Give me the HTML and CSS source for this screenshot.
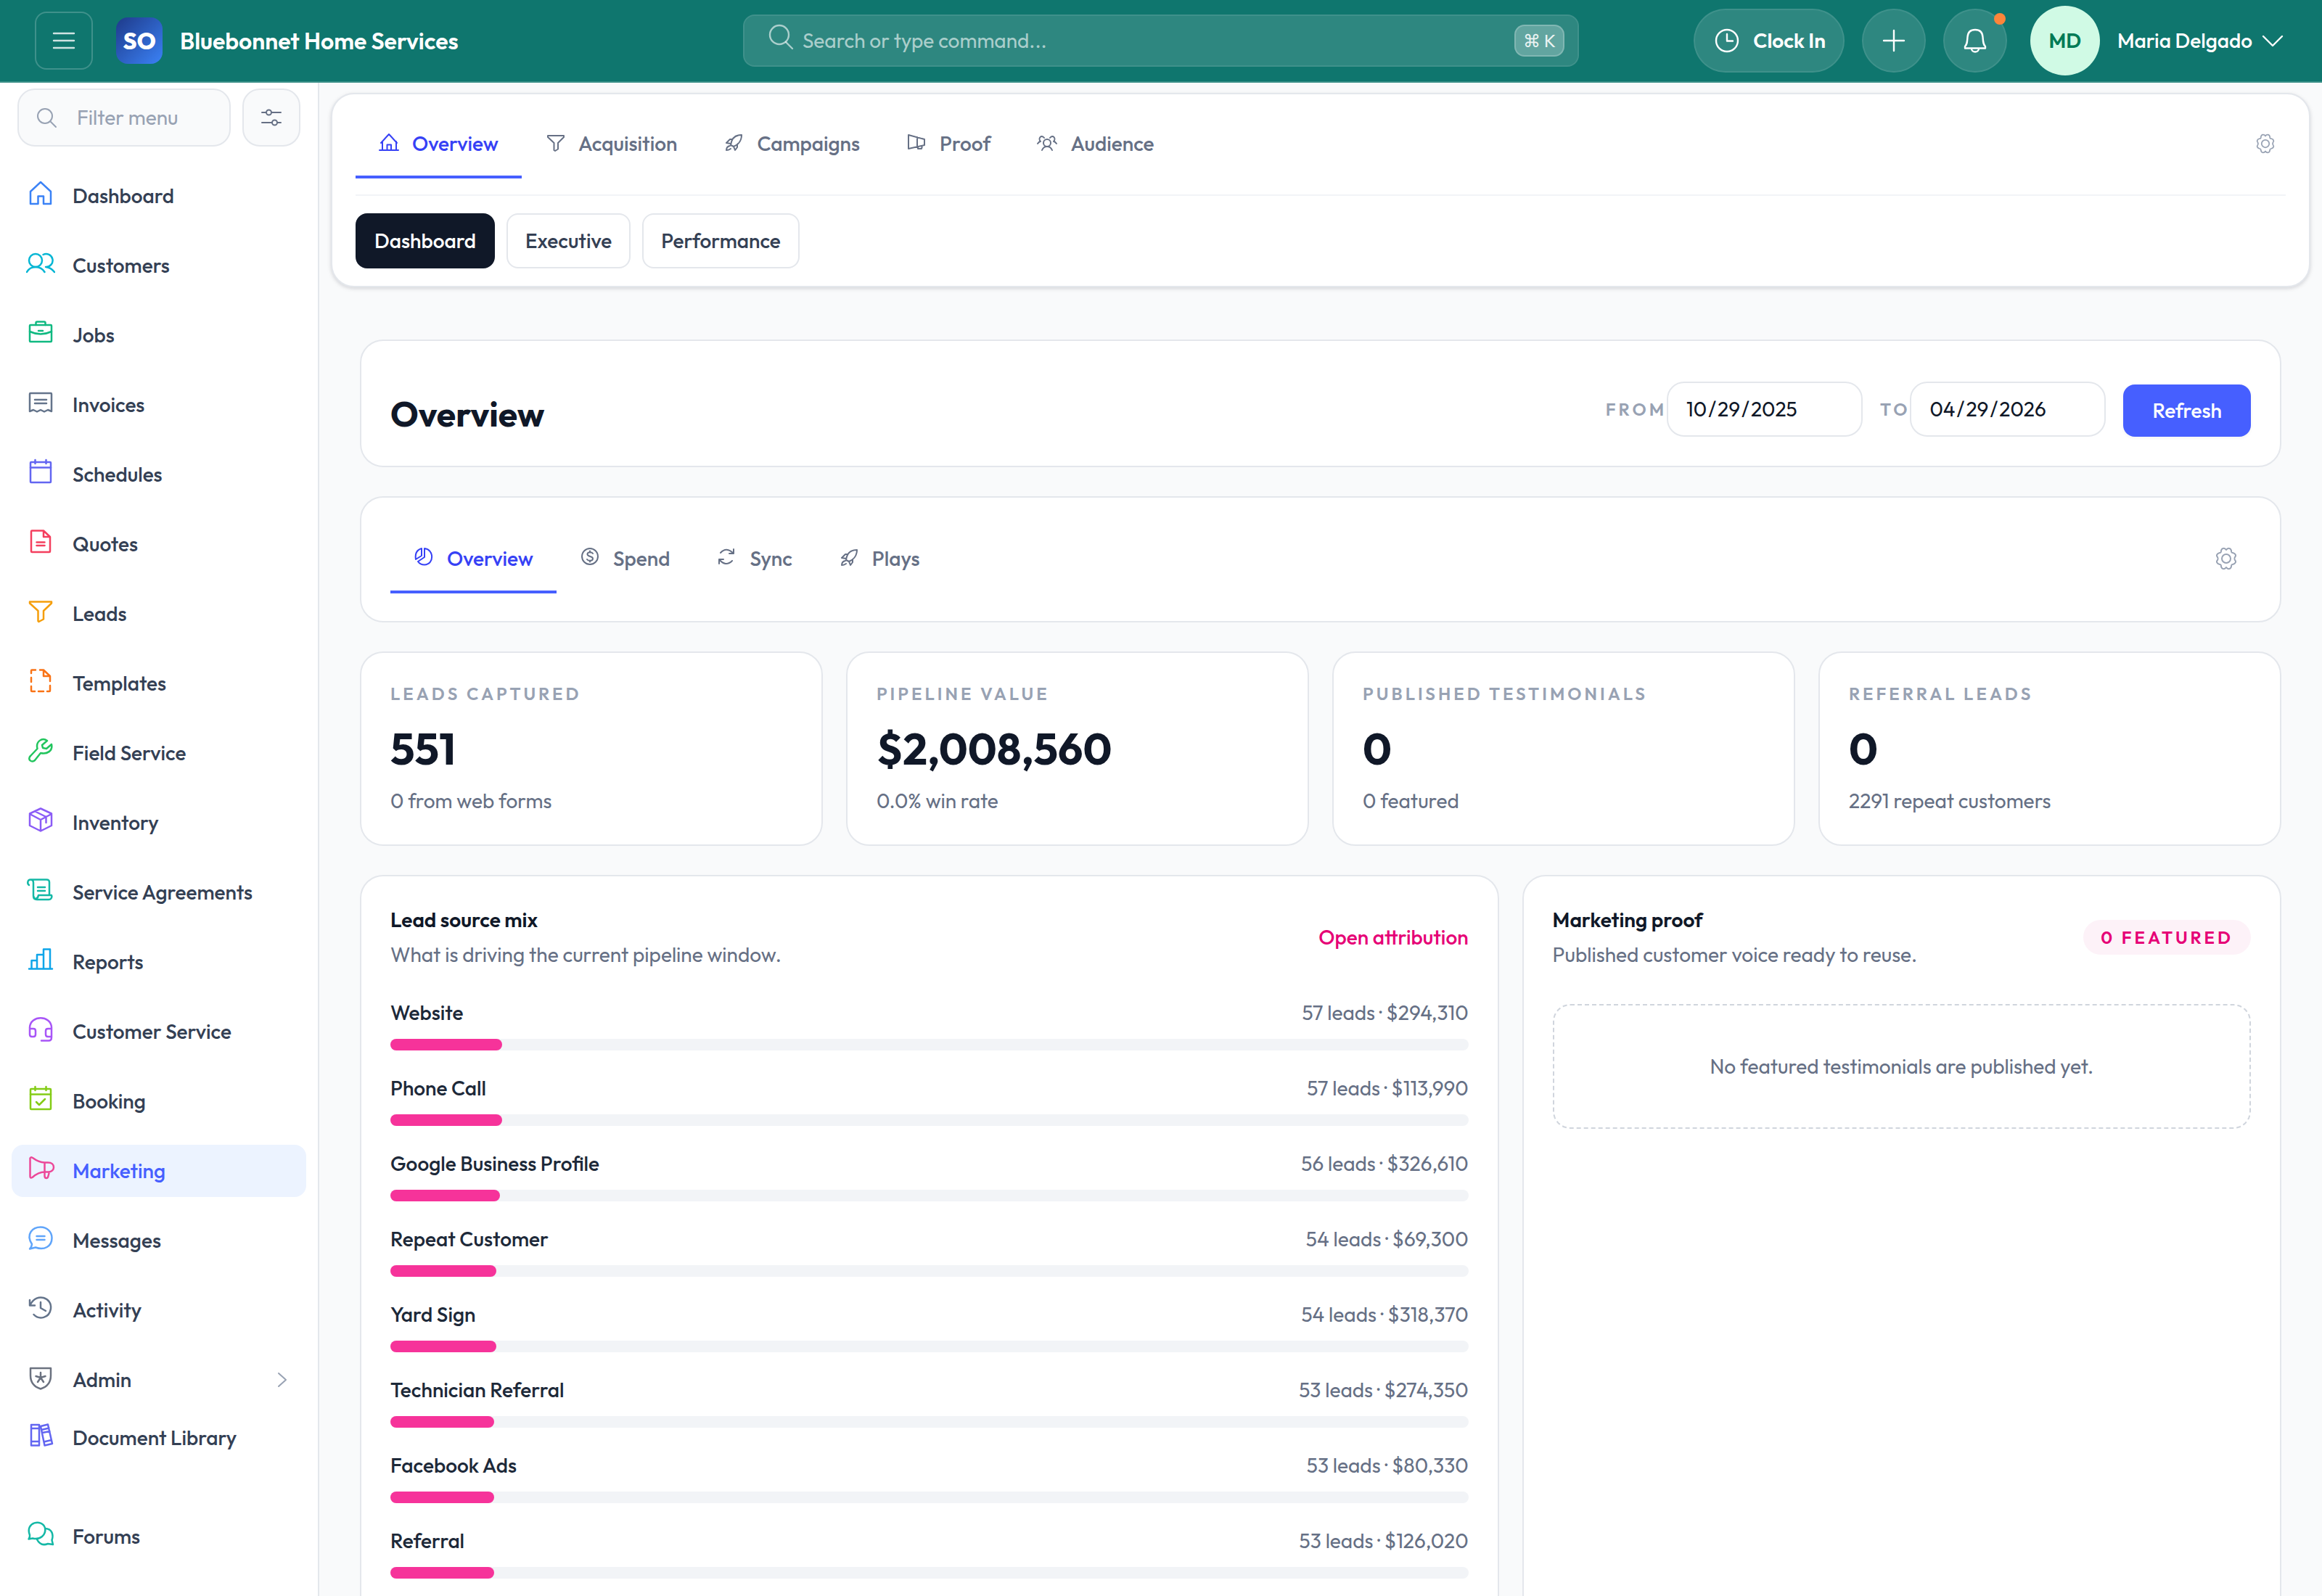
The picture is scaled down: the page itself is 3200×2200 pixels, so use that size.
FILE: index.html
```html
<!DOCTYPE html>
<html lang="en">
<head>
	<meta charset="utf-8">
	<title>Marketing Overview</title>
	<meta name="viewport" content="width=device-width, initial-scale=1.0">
	<link rel="stylesheet" href="styles.css">
</head>
<body>
	<header class="topbar">
		<div class="topbar-left">
			<button class="menu-btn" type="button" aria-label="Toggle menu">
				<svg width="40" height="40" viewBox="0 0 40 40"><path d="M6 10H34M6 20H34M6 30H34"/></svg>
			</button>
			<span class="logo">SO</span>
			<span class="company">Bluebonnet Home Services</span>
		</div>

		<label class="search">
			<svg width="40" height="40" viewBox="0 0 40 40"><circle cx="18" cy="17" r="13"/><path d="M27 27L36 36"/></svg>
			<input type="text" placeholder="Search or type command..." aria-label="Search">
			<kbd>⌘ K</kbd>
		</label>

		<div class="topbar-right">
			<button class="clock-btn" type="button">
				<svg width="40" height="40" viewBox="0 0 40 40"><circle cx="20" cy="20" r="15"/><path d="M20 11V20.500H28"/></svg>
				Clock In
			</button>
			<button class="round-btn" type="button" aria-label="Add">
				<svg width="40" height="40" viewBox="0 0 40 40"><path d="M20 6V34M6 20H34"/></svg>
			</button>
			<button class="round-btn" type="button" aria-label="Notifications">
				<svg width="40" height="40" viewBox="0 0 40 40"><path d="M6 30.500V28C9 25 9 22 9.500 15C10 8 14 5 20 5S30 8 30.500 15C31 22 31 25 34 28V30.500ZM15 31C15 37 25 37 25 31"/></svg>
				<span class="dot"></span>
			</button>
			<button class="user" type="button">
				<span class="avatar">MD</span>
				<span>Maria Delgado</span>
				<svg width="40" height="40" viewBox="0 0 40 40"><path d="M7 14L20 27L33 14"/></svg>
			</button>
		</div>
	</header>

	<div class="shell">
		<aside class="sidebar">
			<div class="filter-row">
				<label class="filter">
					<svg width="32" height="32" viewBox="0 0 32 32"><circle cx="14" cy="14" r="10"/><path d="M21 21L29 29"/></svg>
					<input type="text" placeholder="Filter menu" aria-label="Filter menu">
				</label>
				<button class="filter-btn" type="button" aria-label="Menu settings">
					<svg width="32" height="32" viewBox="0 0 32 32"><path d="M3 9H9M16 9H29M3 23H17M24 23H29"/><circle cx="12.500" cy="9" r="3.500"/><circle cx="20.500" cy="23" r="3.500"/></svg>
				</button>
			</div>

			<nav class="nav">
				<a href="#" class="blue"><svg width="40" height="40" viewBox="0 0 40 40"><path d="M6 18L20 5L34 18V35H24V24.500H16.500V35H6Z"/></svg>Dashboard</a>
				<a href="#" class="cyan"><svg width="40" height="40" viewBox="0 0 40 40"><circle cx="13" cy="17" r="9"/><path d="M1 33C6 23.500 20 23.500 25.500 33M23.500 9A9 9 0 1 1 27 26C32 26.500 36 29 39 33"/></svg>Customers</a>
				<a href="#" class="emerald"><svg width="40" height="40" viewBox="0 0 40 40"><rect x="5" y="10" width="30" height="23" rx="1"/><path d="M13.500 10V7Q13.500 5.500 15 5.500H25Q26.500 5.500 26.500 7V10M5 19Q20 26 35 19M17 18H23"/></svg>Jobs</a>
				<a href="#" class="slate"><svg width="40" height="40" viewBox="0 0 40 40"><path d="M5 33V9Q5 8 6 8H34Q35 8 35 9V33L30 31L25 33.500L20 31L15 33.500L10 31ZM12 17H28M12 22H28"/></svg>Invoices</a>
				<a href="#" class="indigo"><svg width="40" height="40" viewBox="0 0 40 40"><rect x="6" y="7" width="28" height="28" rx="1"/><path d="M6 14.500H34M12.500 4V9M27.500 4V9"/></svg>Schedules</a>
				<a href="#" class="rose"><svg width="40" height="40" viewBox="0 0 40 40"><path d="M24 5.500H8Q7 5.500 7 6.500V34Q7 35 8 35H32Q33 35 33 34V14ZV14H33M14.500 21.500H25.500M14.500 26H25.500"/></svg>Quotes</a>
				<a href="#" class="amber"><svg width="40" height="40" viewBox="0 0 40 40"><path d="M5 7.500H35V9.500L24 20V31.500L17.500 35L16.500 34V20L5 9.500Z"/></svg>Leads</a>
				<a href="#" class="orange"><svg width="40" height="40" viewBox="0 0 40 40"><path d="M24 5.500L33 14H24ZM19 5.500H24M13 5.500H8Q7 5.500 7 6.500V10M7 16V22M7 28V34Q7 35 8 35H12M17 35H24M29 35H32Q33 35 33 34V27M33 14V21"/></svg>Templates</a>
				<a href="#" class="green"><svg width="40" height="40" viewBox="0 0 40 40"><path d="M29 7C22 2 13 8 15.500 18L6 28C1 33 8 38 12 34L20 24C29 26 37 21 35 12L28 18L23 17L22 13Z"/></svg>Field Service</a>
				<a href="#" class="violet"><svg width="40" height="40" viewBox="0 0 40 40"><path d="M20 4.500L35 11.500V28L20 35.500L5 28V11.500ZM5 12L20 20L35 12M20 20V35.500M12.500 8.500L27.500 16V24"/></svg>Inventory</a>
				<a href="#" class="teal"><svg width="40" height="40" viewBox="0 0 40 40"><path d="M4 14C1 12 2 6.500 6 6.500H28Q32 6.500 32 10V27M6 6.500Q10 6.500 10 11V29Q10 34 15 34H31C35 34 36 30 35 28H17C16 34 11 34 10.500 30M16 17H26M16 22H26"/></svg>Service Agreements</a>
				<a href="#" class="sky"><svg width="40" height="40" viewBox="0 0 40 40"><path d="M4 33.500H36M7.500 33V22H15M15 33V14H24M24 33V6.500H33V33"/></svg>Reports</a>
				<a href="#" class="purple"><svg width="40" height="40" viewBox="0 0 40 40"><path d="M5 22V18C6 1 34 1 35 18V32Q35 36.500 31 36.500H21M5 20H10Q13 20 13 23V28Q13 31 10 31H8Q5 31 5 28ZM35 20H30Q27 20 27 23V28Q27 31 30 31H35"/></svg>Customer Service</a>
				<a href="#" class="lime"><svg width="40" height="40" viewBox="0 0 40 40"><rect x="6" y="7" width="28" height="28" rx="1"/><path d="M6 14.500H34M12.500 4V9M27.500 4V9M14 25L18 29L26 21"/></svg>Booking</a>
				<a href="#" class="pink active"><svg width="40" height="40" viewBox="0 0 40 40"><path d="M5.500 6.500Q6 4.500 9 6Q17 12 25.500 12.500H30C41 12.500 40 25.500 31 25.500H25.500Q17 25.500 8.500 33Q5.500 34.500 5.500 31.500ZM25.500 12.500V31Q25.500 34 28 34Q30 34 30.500 31L32 25.500"/></svg>Marketing</a>
				<a href="#" class="lightblue"><svg width="40" height="40" viewBox="0 0 40 40"><path d="M8 29C-1 15 9 5.500 20 5.500C29 5.500 35.500 12 35.500 20.500C35.500 32 25 38 13 33.500L5 35.500Q8 32 8 29ZM14.500 18H25.500M14.500 23H25.500"/></svg>Messages</a>
				<a href="#" class="slate"><svg width="40" height="40" viewBox="0 0 40 40"><path d="M5 10V17.500H12M6 16C15 -1 36 7 34 22C32 35 18 38 10.500 30M20 13V21L27 25"/></svg>Activity</a>
				<a href="#" class="gray"><svg width="40" height="40" viewBox="0 0 40 40"><path d="M6 8H34V18Q34 32 20 36.500Q6 32 6 18ZM20 14V21M20 21L13.500 19M20 21L26.500 19M20 21L16 27M20 21L24 27"/></svg>Admin
					<svg class="caret" width="24" height="24" viewBox="0 0 24 24"><path d="M6 3L16 12L6 21"/></svg></a>
				<a href="#" class="indigo doc"><svg width="40" height="40" viewBox="0 0 40 40"><path d="M7 6H18V34.500H7ZM7 11H18M7 29H18M20 8L30 5.500L36 32L25.500 34.500ZM21 13L31.500 10.500M22 17L32.500 15M24.500 29.500L35 27"/></svg>Document Library</a>
				<a href="#" class="teal forums"><svg width="40" height="40" viewBox="0 0 40 40"><path d="M5 22C-2 4 22 -1 26 12C28 22 19 29 9 26.500L3.500 27.500Q5.500 24 5 22ZM26 13C36 13 38 22 35.500 29L37 35L30 34Q20 38 15 28"/></svg>Forums</a>
			</nav>
		</aside>

		<main class="main">
			<section class="section-nav">
				<div class="tabs">
					<a href="#" class="tab active"><svg width="28" height="28" viewBox="0 0 28 28"><path d="M1 26H27M5 26V14M24 26V14M3 16L14 4L25 16M11.500 26V18.500H17V26"/></svg>Overview</a>
					<a href="#" class="tab"><svg width="28" height="28" viewBox="0 0 28 28"><path d="M4 6H26V8L18 16V24.500L14 27L12.500 26V16L4 8Z"/></svg>Acquisition</a>
					<a href="#" class="tab"><svg width="28" height="28" viewBox="0 0 28 28"><path d="M10 19C11 10 16 5 25 5C25 14 19 19 14 21ZM12 11H9L4 16L10 17M19 18V22L16 26L14 21M9 20Q4 21 4 26Q7 26 10 24"/></svg>Campaigns</a>
					<a href="#" class="tab"><svg width="28" height="28" viewBox="0 0 28 28"><path d="M3 5L25 11V19L3 24ZM15 8V21M16 21V24H21L22 20"/></svg>Proof</a>
					<a href="#" class="tab"><svg width="28" height="28" viewBox="0 0 28 28"><circle cx="14" cy="16" r="5"/><path d="M7 26Q9 21 14 21T21 26M1 17Q3 14 5 14C1 10 6 4 10 9M27 17Q25 14 23 14C27 10 22 4 18 9"/></svg>Audience</a>
					<button class="gear" type="button" aria-label="Tab settings">
						<svg width="28" height="28" viewBox="0 0 32 32"><path d="M16 4C18 1 22 1 23 5C23 7 23 8 25 8C29 9 30 12 28 14C27 16 27 16 28 18C30 20 29 23 25 24C23 24 23 25 23 27C22 31 18 31 16 28C14 31 10 31 9 27C9 25 9 24 7 24C3 23 2 20 4 18C5 16 5 16 4 14C2 12 3 9 7 8C9 8 9 7 9 5C10 1 14 1 16 4Z"/><circle cx="16" cy="16" r="6"/></svg>
					</button>
				</div>
				<div class="pills">
					<a href="#" class="pill active">Dashboard</a>
					<a href="#" class="pill">Executive</a>
					<a href="#" class="pill">Performance</a>
				</div>
			</section>

			<div class="content">
				<section class="card page-head">
					<h1>Overview</h1>
					<form class="range">
						<label><span>From</span><input type="date" value="2025-10-29"></label>
						<label><span>To</span><input type="date" value="2026-04-29"></label>
						<button class="refresh" type="button">Refresh</button>
					</form>
				</section>

				<section class="card">
					<div class="tabs">
						<a href="#" class="tab active"><svg width="28" height="28" viewBox="0 0 28 28"><path d="M15 3C28 4 29 25 15 25.500Q9 25.500 6 21L15 15ZM11 3V13L3 18Q1 6 11 3Z"/></svg>Overview</a>
						<a href="#" class="tab"><svg width="28" height="28" viewBox="0 0 28 28"><circle cx="14" cy="14" r="11"/><path d="M18 10C16 7 10.500 8 10.500 11C10.500 15 18 13 18 17C18 20.500 12 21 10 18M14 6.500V8.500M14 19.500V21.500"/></svg>Spend</a>
						<a href="#" class="tab"><svg width="28" height="28" viewBox="0 0 28 28"><path d="M6 9Q14 0 24 10M24 4V10H18M4 24V18H10M4 18Q13 29 22 20"/></svg>Sync</a>
						<a href="#" class="tab"><svg width="28" height="28" viewBox="0 0 28 28"><path d="M10 19C11 10 16 5 25 5C25 14 19 19 14 21ZM12 11H9L4 16L10 17M19 18V22L16 26L14 21M9 20Q4 21 4 26Q7 26 10 24"/></svg>Plays</a>
						<button class="gear wide" type="button" aria-label="Tab settings">
							<svg width="32" height="32" viewBox="0 0 32 32"><path d="M16 4C18 1 22 1 23 5C23 7 23 8 25 8C29 9 30 12 28 14C27 16 27 16 28 18C30 20 29 23 25 24C23 24 23 25 23 27C22 31 18 31 16 28C14 31 10 31 9 27C9 25 9 24 7 24C3 23 2 20 4 18C5 16 5 16 4 14C2 12 3 9 7 8C9 8 9 7 9 5C10 1 14 1 16 4Z"/><circle cx="16" cy="16" r="6"/></svg>
						</button>
					</div>
				</section>

				<section class="stats">
					<div class="card stat">
						<p class="label">Leads captured</p>
						<p class="value">551</p>
						<p class="sub">0 from web forms</p>
					</div>
					<div class="card stat">
						<p class="label">Pipeline value</p>
						<p class="value">$2,008,560</p>
						<p class="sub">0.0% win rate</p>
					</div>
					<div class="card stat">
						<p class="label">Published testimonials</p>
						<p class="value">0</p>
						<p class="sub">0 featured</p>
					</div>
					<div class="card stat">
						<p class="label">Referral leads</p>
						<p class="value">0</p>
						<p class="sub">2291 repeat customers</p>
					</div>
				</section>

				<section class="columns">
					<div class="card">
						<div class="card-head">
							<div>
								<h2>Lead source mix</h2>
								<p class="sub">What is driving the current pipeline window.</p>
							</div>
							<a href="#" class="link">Open attribution</a>
						</div>
						<!-- bar width = leads / 551 -->
						<ul class="sources">
							<li><p><b>Website</b><span>57 leads · $294,310</span></p><div class="bar"><i style="width:10.34%"></i></div></li>
							<li><p><b>Phone Call</b><span>57 leads · $113,990</span></p><div class="bar"><i style="width:10.34%"></i></div></li>
							<li><p><b>Google Business Profile</b><span>56 leads · $326,610</span></p><div class="bar"><i style="width:10.16%"></i></div></li>
							<li><p><b>Repeat Customer</b><span>54 leads · $69,300</span></p><div class="bar"><i style="width:9.8%"></i></div></li>
							<li><p><b>Yard Sign</b><span>54 leads · $318,370</span></p><div class="bar"><i style="width:9.8%"></i></div></li>
							<li><p><b>Technician Referral</b><span>53 leads · $274,350</span></p><div class="bar"><i style="width:9.62%"></i></div></li>
							<li><p><b>Facebook Ads</b><span>53 leads · $80,330</span></p><div class="bar"><i style="width:9.62%"></i></div></li>
							<li><p><b>Referral</b><span>53 leads · $126,020</span></p><div class="bar"><i style="width:9.62%"></i></div></li>
						</ul>
					</div>

					<div class="card">
						<div class="card-head proof-head">
							<div>
								<h2>Marketing proof</h2>
								<p class="sub">Published customer voice ready to reuse.</p>
							</div>
							<span class="badge">0 featured</span>
						</div>
						<p class="empty">No featured testimonials are published yet.</p>
					</div>
				</section>
			</div>
		</main>
	</div>
</body>
</html>
```
FILE: styles.css
```css
*{
	margin:0;
	padding:0;
	box-sizing:border-box;
}

body{
	display:flex;
	flex-direction:column;
	height:100vh;
	overflow:hidden;
	font-family:"Outfit", Lato, sans-serif;
	font-size:28px;
	line-height:40px;
	color:#101828;
	background:#f9fafb;
}

a{
	color:inherit;
	text-decoration:none;
}

button, input, kbd{
	font:inherit;
	color:inherit;
}

button{
	border:none;
	background:none;
}

input{
	border:none;
	outline:none;
	background:none;
	min-width:0;
}

ul{
	list-style:none;
}

svg{
	flex:none;
	display:block;
	fill:none;
	stroke:currentColor;
	stroke-width:2;
	stroke-linecap:round;
	stroke-linejoin:round;
}

/* top bar */
.topbar{
	flex:none;
	display:grid;
	grid-template-columns:1fr minmax(0, 1152px) 1fr;
	align-items:center;
	height:114px;
	padding:0 48px;
	color:white;
	background:#0f766e;
	border-bottom:2px solid #3a8f88;
}

.topbar-left, .topbar-right{
	display:flex;
	align-items:center;
	white-space:nowrap;
}

.topbar-right{
	justify-content:flex-end;
	gap:24px;
}

.topbar svg{
	stroke-width:2.4;
}

.menu-btn{
	display:grid;
	place-items:center;
	width:80px;
	height:80px;
	margin-right:32px;
	border:2px solid rgba(255,255,255,.2);
	border-radius:16px;
	color:rgba(255,255,255,.8);
}

.logo{
	display:grid;
	place-items:center;
	width:64px;
	height:64px;
	margin-right:24px;
	border-radius:16px;
	font-size:32px;
	font-weight:800;
	background:linear-gradient(135deg, #1e3a8a, #3b82f6);
}

.company{
	font-size:32px;
	font-weight:600;
}

.search{
	display:flex;
	align-items:center;
	gap:10px;
	height:72px;
	padding:0 18px 0 30px;
	border:2px solid rgba(255,255,255,.2);
	border-radius:16px;
	background:rgba(255,255,255,.13);
	background-clip:padding-box;
}

.search svg{
	margin-bottom:10px;
	color:rgba(255,255,255,.6);
}

.search input{
	flex:1;
}

.search input::placeholder{
	color:rgba(255,255,255,.6);
}

.search kbd{
	padding:0 10px;
	border:2px solid rgba(255,255,255,.2);
	border-radius:14px;
	font-size:24px;
	color:rgba(255,255,255,.9);
	background:rgba(255,255,255,.25);
}

.clock-btn, .round-btn{
	display:flex;
	align-items:center;
	justify-content:center;
	height:88px;
	border:2px solid rgba(255,255,255,.2);
	border-radius:44px;
	background:rgba(255,255,255,.13);
	background-clip:padding-box;
}

.clock-btn{
	gap:16px;
	padding:0 24px;
	font-weight:600;
}

.round-btn{
	position:relative;
	width:88px;
}

.dot{
	position:absolute;
	top:4px;
	right:0;
	width:16px;
	height:16px;
	border-radius:50%;
	background:#fd853a;
}

.user{
	display:flex;
	align-items:center;
	gap:8px;
	margin-left:8px;
	font-weight:500;
}

.avatar{
	display:grid;
	place-items:center;
	width:96px;
	height:96px;
	margin-right:16px;
	border-radius:50%;
	font-weight:600;
	color:#007a55;
	background:#d0fae5;
}

/* sidebar */
.shell{
	flex:1;
	display:flex;
	min-height:0;
}

.sidebar{
	flex:none;
	width:440px;
	padding-top:8px;
	border-right:2px solid #e4e7ec;
	background:white;
}

.filter-row{
	display:flex;
	gap:16px;
	padding:0 24px;
	margin-bottom:32px;
}

.filter, .filter-btn{
	display:flex;
	align-items:center;
	height:80px;
	border:2px solid #e4e7ec;
	border-radius:24px;
	background:#f9fafb;
}

.filter{
	flex:1;
	gap:26px;
	min-width:0;
	padding:0 22px;
	color:#98a2b3;
}

.filter input{
	width:100%;
}

.filter input::placeholder{
	color:#98a2b3;
}

.filter-btn{
	justify-content:center;
	width:80px;
	color:#667085;
}

.nav{
	display:flex;
	flex-direction:column;
	gap:24px;
	padding:0 16px;
}

.nav a{
	display:flex;
	align-items:center;
	gap:24px;
	height:72px;
	padding:0 20px;
	border-radius:16px;
	font-weight:500;
	color:#344054;
}

.nav svg{
	margin-bottom:8px;
	stroke-width:2.5;
}

.nav .active{
	color:#465fff;
	background:#ecf3ff;
}

.nav .caret{
	margin:0 0 0 auto;
	stroke-width:2;
}

.nav .doc{
	margin-top:-16px;
}

.nav .forums{
	margin-top:40px;
}

.blue > svg{stroke:#3b82f6;}
.cyan > svg{stroke:#06b6d4;}
.emerald > svg{stroke:#10b981;}
.slate > svg{stroke:#64748b;}
.indigo > svg{stroke:#6366f1;}
.rose > svg{stroke:#f43f5e;}
.amber > svg{stroke:#f59e0b;}
.orange > svg{stroke:#f97316;}
.green > svg{stroke:#22c55e;}
.violet > svg{stroke:#8b5cf6;}
.teal > svg{stroke:#14b8a6;}
.sky > svg{stroke:#0ea5e9;}
.purple > svg{stroke:#a855f7;}
.lime > svg{stroke:#84cc16;}
.pink > svg{stroke:#ec4899;}
.lightblue > svg{stroke:#60a5fa;}
.gray > svg{stroke:#6b7280;}
.gray > .caret{stroke:#98a2b3;}

/* main column */
.main{
	flex:1;
	min-width:0;
	padding:14px 16px 0;
}

.section-nav{
	padding:24px 32px;
	border:2px solid #e4e7ec;
	border-radius:32px;
	background:white;
	box-shadow:0 2px 6px rgba(16,24,40,.1), 0 2px 4px rgba(16,24,40,.06);
}

.tabs{
	display:flex;
}

.section-nav .tabs{
	padding-bottom:24px;
	margin-bottom:24px;
	border-bottom:2px solid #f2f4f7;
}

.tab{
	display:flex;
	align-items:center;
	gap:18px;
	height:92px;
	margin-bottom:-2px;
	padding:0 32px;
	border-bottom:4px solid transparent;
	font-weight:500;
	color:#667085;
}

.tab svg{
	margin-bottom:6px;
}

.tab.active{
	color:#3641f5;
	border-color:#465fff;
}

.gear{
	display:grid;
	place-items:center;
	width:56px;
	height:88px;
	margin-left:auto;
	color:#98a2b3;
}

.gear.wide{
	width:68px;
}

.pills{
	display:flex;
	gap:16px;
}

.pill{
	padding:16px 24px;
	border:2px solid #e4e7ec;
	border-radius:16px;
	font-weight:500;
	color:#344054;
}

.pill.active{
	color:white;
	border-color:#101828;
	background:#101828;
}

.content{
	display:flex;
	flex-direction:column;
	gap:40px;
	padding:72px 40px;
}

.card{
	padding:40px;
	border:2px solid #e4e7ec;
	border-radius:32px;
	background:white;
}

.page-head{
	display:flex;
	align-items:flex-end;
	justify-content:space-between;
}

.page-head h1{
	padding-top:28px;
	font-size:48px;
	font-weight:700;
	line-height:64px;
}

.range{
	display:flex;
	align-items:flex-end;
	gap:24px;
}

.range label{
	display:flex;
	align-items:center;
}

.range span{
	font-size:24px;
	font-weight:600;
	letter-spacing:4px;
	text-transform:uppercase;
	color:#98a2b3;
}

.range input{
	width:270px;
	height:76px;
	padding:0 24px;
	border:2px solid #e4e7ec;
	border-radius:24px;
}

.range input::-webkit-datetime-edit-text{
	padding:0 1px;
}

.range input::-webkit-calendar-picker-indicator{
	display:none;
}

.refresh{
	height:72px;
	padding:0 40px;
	border-radius:16px;
	font-weight:500;
	color:white;
	background:#465fff;
	box-shadow:0 2px 4px rgba(16,24,40,.05);
}

.stats{
	display:grid;
	grid-template-columns:repeat(4, 1fr);
	gap:32px;
}

.label{
	font-size:24px;
	font-weight:600;
	line-height:32px;
	letter-spacing:4px;
	text-transform:uppercase;
	color:#98a2b3;
}

.value{
	margin:24px 0 16px;
	font-size:60px;
	font-weight:700;
	line-height:72px;
}

.sub{
	color:#667085;
}

.columns{
	display:grid;
	grid-template-columns:3fr 2fr;
	gap:32px;
}

.card-head{
	display:flex;
	align-items:center;
	justify-content:space-between;
	margin-bottom:40px;
}

.proof-head{
	margin-bottom:48px;
}

.card-head h2{
	margin-bottom:8px;
	font-size:28px;
	font-weight:600;
}

.link{
	font-weight:500;
	color:#e60076;
}

.sources{
	display:grid;
	gap:32px;
	padding-bottom:40px;
}

.sources p{
	display:flex;
	justify-content:space-between;
	margin-bottom:16px;
	color:#667085;
}

.sources b{
	font-weight:500;
	color:#1d2939;
}

.bar{
	height:16px;
	border-radius:8px;
	background:#f2f4f7;
}

.bar i{
	display:block;
	height:100%;
	border-radius:8px;
	background:#f6339a;
}

.badge{
	padding:4px 24px;
	border-radius:24px;
	font-size:24px;
	font-weight:600;
	letter-spacing:4px;
	text-transform:uppercase;
	color:#e60076;
	background:#fdf2f8;
}

.empty{
	padding:64px 40px;
	border:2px dashed #d0d5dd;
	border-radius:24px;
	text-align:center;
	color:#667085;
}
```
